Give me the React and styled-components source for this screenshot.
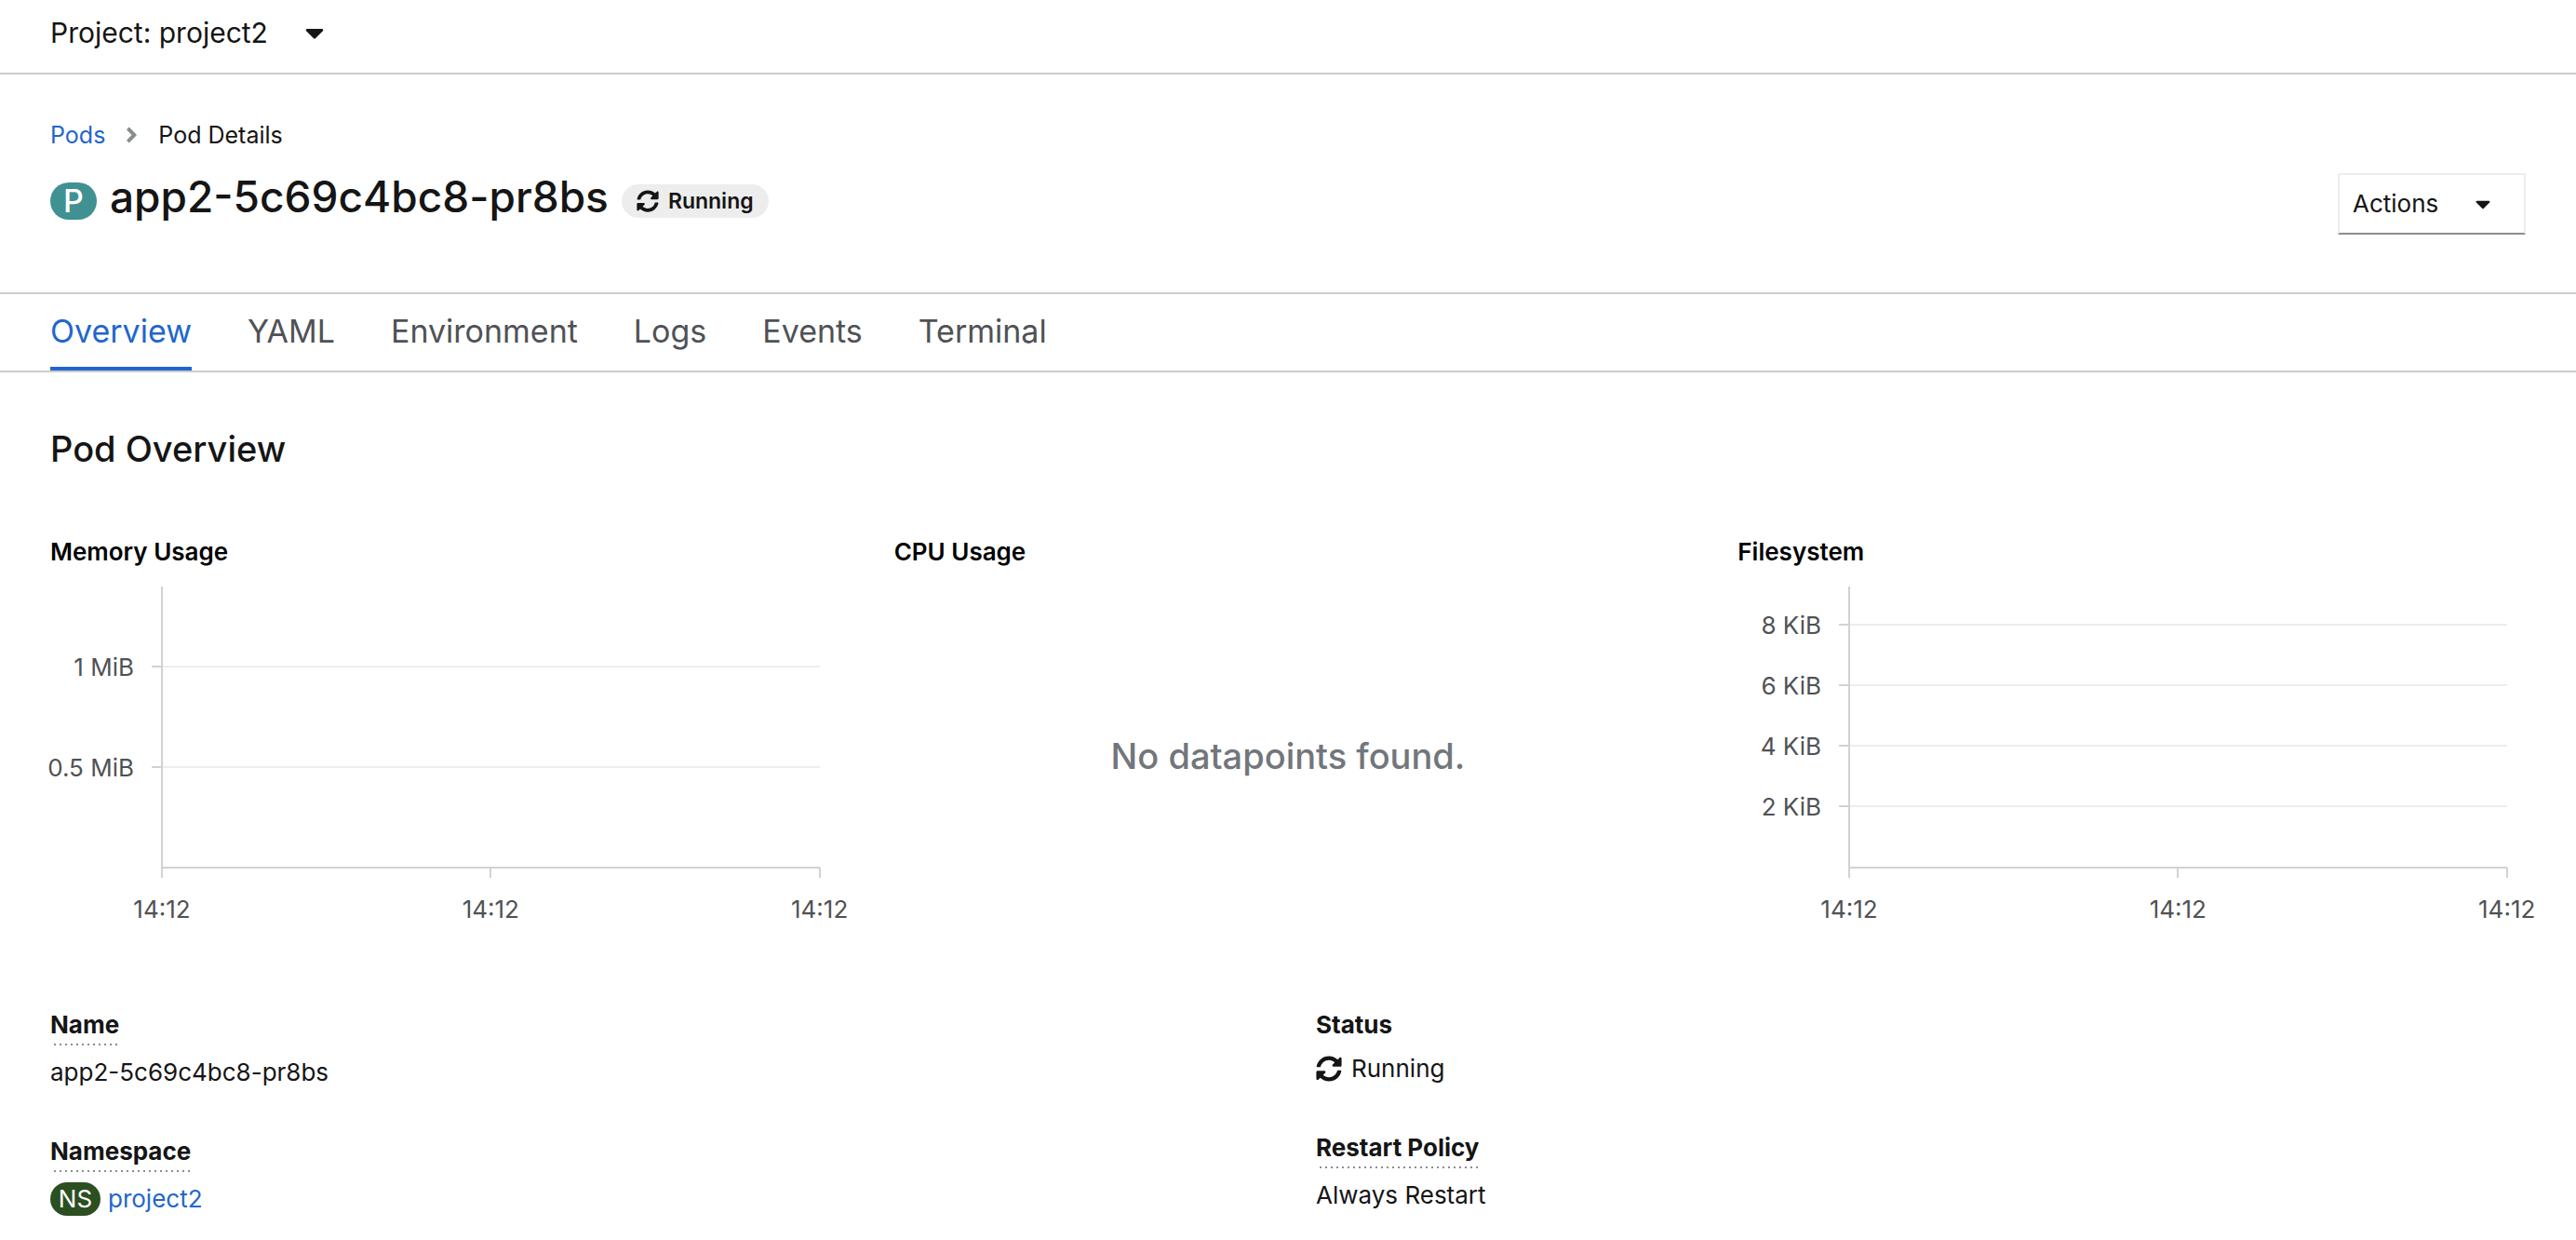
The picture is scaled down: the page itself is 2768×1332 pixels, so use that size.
import React from "react";
import styled, { createGlobalStyle } from "styled-components";
import { FaAngleRight, FaCaretDown, FaSyncAlt } from "react-icons/fa";

const GlobalStyle = createGlobalStyle`
  * { box-sizing: border-box; }
  body {
    margin: 0;
    background: #fff;
    color: #151515;
    font-family: Inter, "Liberation Sans", sans-serif;
    font-size: 26px;
    line-height: 40px;
  }
  h1, h2, h3, p, dl, dt, dd, ol { margin: 0; padding: 0; font-weight: 400; }
  button { font: inherit; color: inherit; background: none; border: 0; padding: 0; cursor: pointer; }
  a { color: #2266cc; text-decoration: none; }
`;

const ProjectBar = styled.header`
  display: flex;
  height: 80px;
  padding: 0 54px;
  border-bottom: 2px solid #ccc;
`;

const ProjectToggle = styled.button`
  display: flex;
  align-items: center;
  gap: 40px;
  height: 70px;
  font-size: 30px;
  white-space: nowrap;
  svg { width: 20px; height: 32px; }
`;

const PageHead = styled.div`
  display: flex;
  justify-content: space-between;
  align-items: flex-start;
  padding: 44px 54px 48px;
  border-bottom: 2px solid #ccc;
`;

const Crumbs = styled.ol`
  display: flex;
  align-items: center;
  list-style: none;
  height: 42px;
  font-size: 25px;
  li { display: flex; align-items: center; }
  svg { width: 15px; height: 26px; margin: 0 21px; color: #8a8d90; }
`;

const TitleRow = styled.div`
  display: flex;
  align-items: center;
  height: 100px;
`;

const ResourceBadge = styled.span`
  display: flex;
  align-items: center;
  justify-content: center;
  flex: none;
  background: ${(p) => p.$color};
  color: #fff;
  min-width: ${(p) => (p.$large ? 50 : 54)}px;
  height: ${(p) => (p.$large ? 40 : 36)}px;
  border-radius: 20px;
  font-size: ${(p) => (p.$large ? 34 : 26)}px;
  font-weight: ${(p) => (p.$large ? 500 : 400)};
  margin-right: ${(p) => (p.$large ? 14 : 8)}px;
`;

const Title = styled.h1`
  margin-bottom: 10px;
  font-size: 46px;
  font-weight: 500;
  line-height: 64px;
`;

const StatusPill = styled.span`
  display: flex;
  align-items: center;
  gap: 10px;
  height: 36px;
  margin-left: 14px;
  padding: 0 16px;
  border-radius: 18px;
  background: #ededed;
  font-size: 23px;
  font-weight: 600;
  svg { width: 24px; height: 24px; }
`;

const ActionsButton = styled.button`
  display: flex;
  align-items: center;
  justify-content: space-between;
  width: 202px;
  height: 66px;
  margin-top: 62px;
  padding: 0 36px 0 14px;
  border: 2px solid #ededed;
  border-bottom-color: #8a8d90;
  svg { width: 16px; height: 28px; }
`;

const Tabs = styled.nav`
  display: flex;
  gap: 60px;
  height: 84px;
  padding: 0 54px;
  border-bottom: 2px solid #ccc;
`;

const Tab = styled.button`
  height: 82px;
  padding-top: 2px;
  border-bottom: 4px solid ${(p) => (p.$active ? "#2266cc" : "transparent")};
  color: ${(p) => (p.$active ? "#2266cc" : "#4f5255")};
  font-size: 34px;
`;

const Content = styled.main`
  padding: 54px 54px 0;
`;

const SectionTitle = styled.h2`
  font-size: 38px;
  font-weight: 500;
  line-height: 56px;
`;

const Charts = styled.section`
  display: grid;
  grid-template-columns: repeat(3, 1fr);
  gap: 60px;
  margin-top: 63px;
`;

const ChartCard = styled.article`
  display: flex;
  flex-direction: column;
  min-width: 0;
`;

const ChartTitle = styled.h3`
  color: #000;
  font-size: 26px;
  font-weight: 600;
`;

const Plot = styled.div`
  height: 396px;
  padding: 17px 20px 0 120px;
`;

const PlotSvg = styled.svg`
  display: block;
  width: 100%;
  height: 302px;
  overflow: visible;
  shape-rendering: crispEdges;
  text { fill: #4f5255; font-size: 26px; }
`;

const EmptyState = styled.p`
  padding-top: 171px;
  text-align: center;
  color: #72767b;
  font-size: 38px;
  font-weight: 500;
  line-height: 56px;
`;

const Details = styled.div`
  display: grid;
  grid-template-columns: repeat(2, 1fr);
  gap: 60px;
  margin-top: 72px;
`;

const DetailList = styled.dl`
  display: flex;
  flex-direction: column;
  gap: 44px;
`;

const Term = styled.dt`
  height: ${(p) => (p.$hint ? 50 : 46)}px;
  font-weight: 700;
  button {
    height: 42px;
    padding-bottom: 2px;
    line-height: 40px;
    background: repeating-linear-gradient(90deg, transparent 0 4px, #8a8d90 4px 6px) left bottom / 100% 2px no-repeat;
  }
`;

const Value = styled.dd`
  display: flex;
  align-items: center;
  height: 42px;
  svg { width: 28px; height: 28px; margin-right: 10px; }
`;

const PLOT_HEIGHT = 302;

function UsageChart({ title, ticks }) {
  return (
    <ChartCard>
      <ChartTitle>{title}</ChartTitle>
      <Plot>
        <PlotSvg role="img" aria-label={title}>
          {ticks.map((t) => (
            <g key={t.label}>
              <line x1="0" x2="100%" y1={t.y} y2={t.y} stroke="#ededed" strokeWidth="2" />
              <line x1="-11" x2="0" y1={t.y} y2={t.y} stroke="#d2d2d2" strokeWidth="2" />
              <text x="-30" y={t.y + 10} textAnchor="end">{t.label}</text>
            </g>
          ))}
          <line x1="0" x2="0" y1="0" y2={PLOT_HEIGHT} stroke="#d2d2d2" strokeWidth="2" />
          <line x1="0" x2="100%" y1={PLOT_HEIGHT} y2={PLOT_HEIGHT} stroke="#d2d2d2" strokeWidth="2" />
          {["0%", "50%", "100%"].map((x) => (
            <g key={x}>
              <line x1={x} x2={x} y1={PLOT_HEIGHT} y2={PLOT_HEIGHT + 11} stroke="#d2d2d2" strokeWidth="2" />
              <text x={x} y={PLOT_HEIGHT + 54} textAnchor="middle">14:12</text>
            </g>
          ))}
        </PlotSvg>
      </Plot>
    </ChartCard>
  );
}

function Detail({ term, hint, children }) {
  return (
    <div>
      <Term $hint={hint}>{hint ? <button type="button">{term}</button> : term}</Term>
      <Value>{children}</Value>
    </div>
  );
}

const TABS = ["Overview", "YAML", "Environment", "Logs", "Events", "Terminal"];

export default function App() {
  return (
    <>
      <GlobalStyle />
      <ProjectBar>
        <ProjectToggle type="button">Project: project2<FaCaretDown /></ProjectToggle>
      </ProjectBar>
      <PageHead>
        <div>
          <nav aria-label="Breadcrumb">
            <Crumbs>
              <li><a href="#pods">Pods</a><FaAngleRight /></li>
              <li>Pod Details</li>
            </Crumbs>
          </nav>
          <TitleRow>
            <ResourceBadge $large $color="#409292">P</ResourceBadge>
            <Title>app2-5c69c4bc8-pr8bs</Title>
            <StatusPill><FaSyncAlt />Running</StatusPill>
          </TitleRow>
        </div>
        <ActionsButton type="button">Actions<FaCaretDown /></ActionsButton>
      </PageHead>
      <Tabs aria-label="Pod sections">
        {TABS.map((t, i) => <Tab key={t} type="button" $active={i === 0}>{t}</Tab>)}
      </Tabs>
      <Content>
        <SectionTitle>Pod Overview</SectionTitle>
        <Charts>
          <UsageChart title="Memory Usage" ticks={[{ label: "1 MiB", y: 86 }, { label: "0.5 MiB", y: 194 }]} />
          <ChartCard>
            <ChartTitle>CPU Usage</ChartTitle>
            <EmptyState>No datapoints found.</EmptyState>
          </ChartCard>
          <UsageChart
            title="Filesystem"
            ticks={[
              { label: "8 KiB", y: 41 },
              { label: "6 KiB", y: 106 },
              { label: "4 KiB", y: 171 },
              { label: "2 KiB", y: 236 },
            ]}
          />
        </Charts>
        <Details>
          <DetailList>
            <Detail term="Name" hint>app2-5c69c4bc8-pr8bs</Detail>
            <Detail term="Namespace" hint>
              <ResourceBadge $color="#2b4f21">NS</ResourceBadge>
              <a href="#project2">project2</a>
            </Detail>
          </DetailList>
          <DetailList>
            <Detail term="Status"><FaSyncAlt />Running</Detail>
            <Detail term="Restart Policy" hint>Always Restart</Detail>
          </DetailList>
        </Details>
      </Content>
    </>
  );
}
